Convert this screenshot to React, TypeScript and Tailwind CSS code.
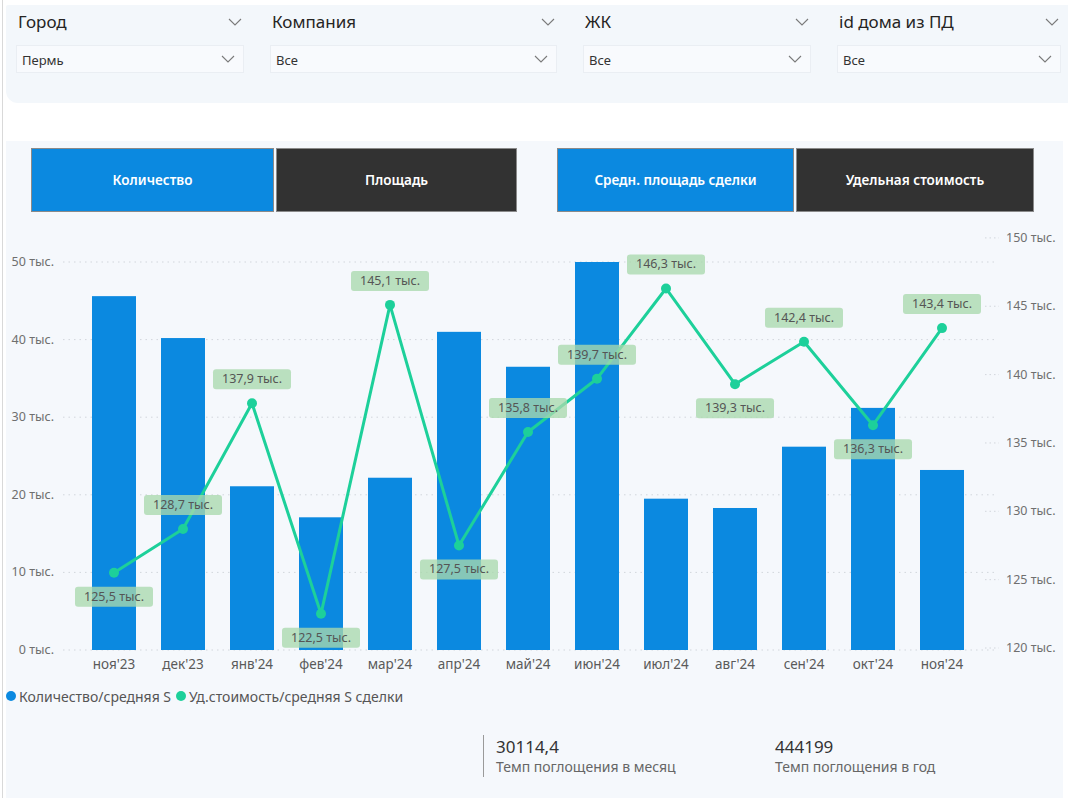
import React from "react";

const months = ["ноя'23", "дек'23", "янв'24", "фев'24", "мар'24", "апр'24", "май'24", "июн'24", "июл'24", "авг'24", "сен'24", "окт'24", "ноя'24"];
const bars = [45.6, 40.2, 21.1, 17.1, 22.2, 41.0, 36.5, 50.0, 19.5, 18.3, 26.2, 31.2, 23.2];
const line = [125.5, 128.7, 137.9, 122.5, 145.1, 127.5, 135.8, 139.7, 146.3, 139.3, 142.4, 136.3, 143.4];
const labelBelow = [true, false, false, true, false, true, false, false, false, true, false, true, false];

const BLUE = "#0b89e0";
const GREEN = "#1dd09a";

const cx = (i: number) => 113 + 69 * i;
const yLeft = (v: number) => 650 - v * 7.76;
const yRight = (v: number) => 648 - (v - 120) * 13.67;

function Chevron() {
  return (
    <svg width="14" height="8" viewBox="0 0 14 8" className="shrink-0">
      <polyline points="1,1 7,7 13,1" fill="none" stroke="#7a7a7a" strokeWidth="1.1" />
    </svg>
  );
}

function Filter({ label, value, width }: { label: string; value: string; width: string }) {
  return (
    <div className={`flex flex-col ${width}`}>
      <div className="flex items-center justify-between h-[34px] pl-[2px] pr-[2px] mb-[6px]">
        <span className="text-[17px] text-[#252423]">{label}</span>
        <Chevron />
      </div>
      <div className="flex items-center justify-between h-[28px] bg-[#f8fafd] border border-[#eaeef3] pl-[5px] pr-[8px]">
        <span className="text-[13px] text-[#333] pt-[3px]">{value}</span>
        <Chevron />
      </div>
    </div>
  );
}

function Chart() {
  const pts = line.map((v, i) => `${cx(i)},${yRight(v)}`).join(" ");
  return (
    <svg width="1057" height="472" viewBox="5 212 1057 472" className="block" style={{ fontFamily: "'Noto Sans', sans-serif" }}>
      {[0, 10, 20, 30, 40, 50].map((v) => (
        <g key={v}>
          <line x1="62" x2="996" y1={yLeft(v)} y2={yLeft(v)} stroke="#d2d6dc" strokeWidth="1" strokeDasharray="1.5 4" />
          <text x="53" y={yLeft(v) + 4} textAnchor="end" fontSize="12.5" fill="#6f6f6f">{v} тыс.</text>
        </g>
      ))}
      {[120, 125, 130, 135, 140, 145, 150].map((v) => (
        <g key={v}>
          <line x1="984" x2="998" y1={yRight(v)} y2={yRight(v)} stroke="#d2d6dc" strokeWidth="1" strokeDasharray="1.5 3" />
          <text x="1005" y={yRight(v) + 4} fontSize="12.5" fill="#6f6f6f">{v} тыс.</text>
        </g>
      ))}
      {bars.map((v, i) => (
        <rect key={i} x={cx(i) - 22} y={yLeft(v)} width="44" height={650 - yLeft(v)} fill={BLUE} />
      ))}
      {months.map((m, i) => (
        <text key={m + i} x={cx(i)} y="669" textAnchor="middle" fontSize="13.5" fill="#5a5a5a">{m}</text>
      ))}
      <polyline points={pts} fill="none" stroke={GREEN} strokeWidth="3" strokeLinejoin="round" />
      {line.map((v, i) => (
        <circle key={i} cx={cx(i)} cy={yRight(v)} r="5" fill={GREEN} />
      ))}
      {line.map((v, i) => {
        const ly = yRight(v) + (labelBelow[i] ? 24 : -24);
        return (
          <g key={i}>
            <rect x={cx(i) - 39} y={ly - 10} width="78" height="20" rx="3" fill="#a9d8ad" opacity="0.78" />
            <text x={cx(i)} y={ly + 4} textAnchor="middle" fontSize="12.5" fill="#555">
              {v.toFixed(1).replace(".", ",")} тыс.
            </text>
          </g>
        );
      })}
    </svg>
  );
}

export default function App() {
  return (
    <div className="w-[1068px] h-[798px] bg-white overflow-hidden" style={{ fontFamily: "'Noto Sans', 'Open Sans', sans-serif" }}>
      <div className="ml-[2px] h-full border-l border-[#d9d9d9] pl-[3px] pt-[5px] flex flex-col">
        <div className="h-[98px] bg-[#f3f7fb] rounded-bl-[12px] rounded-tl-[2px] flex pl-[10px] gap-[26px]">
          <Filter label="Город" value="Пермь" width="w-[228px]" />
          <Filter label="Компания" value="Все" width="w-[287px]" />
          <Filter label="ЖК" value="Все" width="w-[228px]" />
          <Filter label="id дома из ПД" value="Все" width="w-[224px]" />
        </div>
        <div className="h-[38px]" />
        <div className="flex-1 w-[1057px] bg-[#f5f8fc] flex flex-col">
          <div className="flex pl-[25px] pt-[7px] gap-[40px]">
            <div className="flex gap-[2px]">
              <div className="w-[243px] h-[64px] bg-[#0b89e0] border border-[#8a8a8a] flex items-center justify-center text-white text-[13.5px] font-semibold">Количество</div>
              <div className="w-[241px] h-[64px] bg-[#323232] border border-[#8a8a8a] flex items-center justify-center text-white text-[13.5px] font-semibold">Площадь</div>
            </div>
            <div className="flex gap-[2px]">
              <div className="w-[237px] h-[64px] bg-[#0b89e0] border border-[#8a8a8a] flex items-center justify-center text-white text-[13.5px] font-semibold">Средн. площадь сделки</div>
              <div className="w-[238px] h-[64px] bg-[#323232] border border-[#8a8a8a] flex items-center justify-center text-white text-[13.5px] font-semibold">Удельная стоимость</div>
            </div>
          </div>
          <Chart />
          <div className="flex items-center pl-[0px] h-[24px] text-[14px] text-[#555]">
            <span className="w-[10px] h-[10px] rounded-full bg-[#0b89e0] mr-[3px]" />
            <span>Количество/средняя S</span>
            <span className="w-[10px] h-[10px] rounded-full bg-[#1dd09a] ml-[5px] mr-[3px]" />
            <span>Уд.стоимость/средняя S сделки</span>
          </div>
          <div className="flex pl-[477px] pt-[27px]">
            <div className="border-l border-[#9a9a9a] pl-[12px] h-[42px] w-[292px] flex flex-col justify-center">
              <span className="text-[17px] text-[#333] leading-[22px]">30114,4</span>
              <span className="text-[14px] text-[#666] leading-[18px]">Темп поглощения в месяц</span>
            </div>
            <div className="flex flex-col justify-center h-[42px]">
              <span className="text-[17px] text-[#333] leading-[22px]">444199</span>
              <span className="text-[14px] text-[#666] leading-[18px]">Темп поглощения в год</span>
            </div>
          </div>
        </div>
      </div>
    </div>
  );
}
